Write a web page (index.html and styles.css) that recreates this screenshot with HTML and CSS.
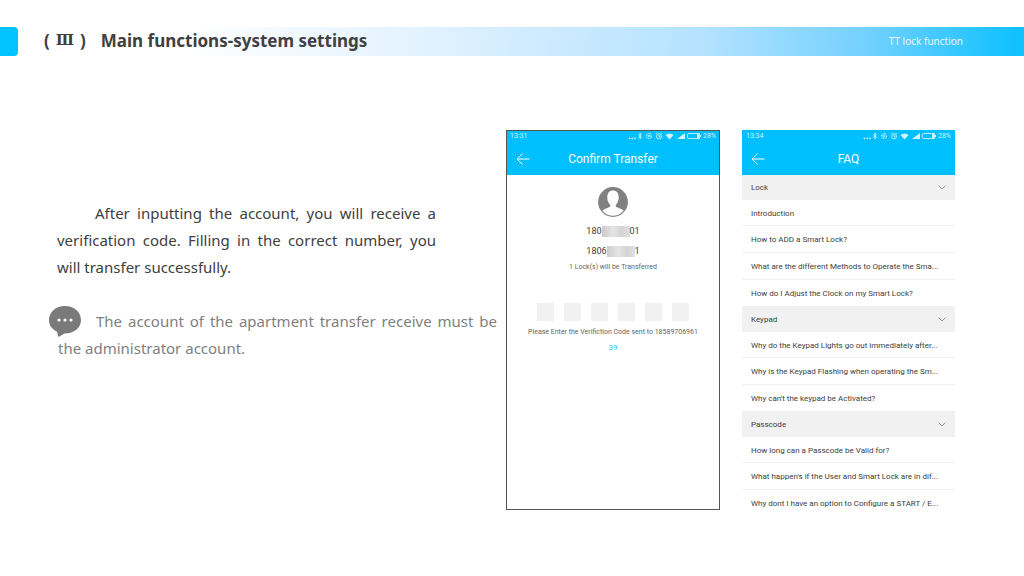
FILE: index.html
```html
<!DOCTYPE html>
<html lang="en">
<head>
<meta charset="utf-8">
<meta name="viewport" content="width=device-width, initial-scale=1">
<title>Main functions - system settings</title>
<link rel="stylesheet" href="styles.css">
</head>
<body>
<svg class="sprite" aria-hidden="true">
  <symbol id="status" viewBox="0 0 74 8">
    <g fill="currentColor">
      <circle cx="1.500" cy="6.300" r=".9"/><circle cx="4.200" cy="6.300" r=".9"/><circle cx="6.900" cy="6.300" r=".9"/>
      <path d="M37.500 3a6 6 0 0 1 8 0L41.500 7.500z"/>
      <path d="M49 7l8-6v6z"/>
      <path d="M69 1.500h3v5h-3z"/><path d="M72 3h1v2h-1z"/>
    </g>
    <g fill="none" stroke="currentColor" stroke-width=".9">
      <path d="M10.500 2.400l3 3L12 7V1l1.500 1.500-3 3"/>
      <circle cx="21" cy="4" r="2.600" stroke-dasharray="3 .8"/><circle cx="21" cy="4" r=".9"/>
      <circle cx="31" cy="4.300" r="2.500"/><path d="M28 1.800l1-1M34 1.800l-1-1M31 3v1.500h1.300"/>
      <rect x="59.500" y="1.500" width="12" height="5" rx="1"/>
    </g>
  </symbol>
  <symbol id="back" viewBox="0 0 14 12">
    <path d="M13.500 6H1M6.500 .7L1 6l5.500 5.300" fill="none" stroke="currentColor"/>
  </symbol>
  <symbol id="chevron" viewBox="0 0 8 5">
    <path d="M.5.500L4 4 7.500.500" fill="none" stroke="currentColor"/>
  </symbol>
</svg>

<header class="top">
  <span class="tab"></span>
  <div class="bar">
    <h1 class="title"><span class="numeral">(<span class="roman">Ⅲ</span>)</span>Main functions-system settings</h1>
    <span class="topic">TT lock function</span>
  </div>
</header>

<main class="content">
  <section class="copy">
    <p class="lead">After inputting the account, you will receive a verification code. Filling in the correct number, you will transfer successfully.</p>
    <div class="note">
      <svg class="bubble" viewBox="0 0 32 32" aria-hidden="true">
        <path d="M16 0C7 0 0 6 0 14.200c0 5 3 9 8 11.500L9.500 31l6-3.600C25 27.500 32 22 32 14.200 32 6 25 0 16 0z" fill="#7a7a7a"/>
        <g fill="#fff"><circle cx="10" cy="14" r="1.600"/><circle cx="16" cy="14" r="1.600"/><circle cx="22" cy="14" r="1.600"/></g>
      </svg>
      <p class="note-text">The account of the apartment transfer receive must be the administrator account.</p>
    </div>
  </section>

  <section class="phone framed">
    <header class="app">
      <div class="status"><span>13:31</span><svg class="status-icons" aria-hidden="true"><use href="#status"/></svg><span>28%</span></div>
      <div class="nav">
        <button class="back" type="button" aria-label="Back"><svg class="back-icon"><use href="#back"/></svg></button>
        <h2 class="app-title">Confirm Transfer</h2>
      </div>
    </header>
    <form class="confirm">
      <svg class="avatar" viewBox="0 0 30 30" aria-hidden="true">
        <circle cx="15" cy="15" r="14.300" fill="#fff" stroke="#808080" stroke-width="1.200"/>
        <path d="M15 .7A14.300 14.300 0 0 0 4 24c2-1.800 4.500-2.800 7.500-4 .9-.5.900-1.300.6-2.200C10.300 16 9.300 13.500 9.300 10.500 9.300 6 11.500 3.500 15 3.500s5.700 2.500 5.700 7c0 3-1 5.500-2.800 7.300-.3.900-.3 1.700.6 2.200 3 1.200 5.500 2.200 7.500 4A14.300 14.300 0 0 0 15 .7z" fill="#808080"/>
      </svg>
      <p class="account">180<span class="mask"></span>01</p>
      <p class="account">1806<span class="mask"></span>1</p>
      <p class="hint">1 Lock(s) will be Transferred</p>
      <div class="code">
        <input class="digit" aria-label="Digit 1" maxlength="1"><input class="digit" aria-label="Digit 2" maxlength="1"><input class="digit" aria-label="Digit 3" maxlength="1"><input class="digit" aria-label="Digit 4" maxlength="1"><input class="digit" aria-label="Digit 5" maxlength="1"><input class="digit" aria-label="Digit 6" maxlength="1">
      </div>
      <p class="hint">Please Enter the Verifiction Code sent to 18589706961</p>
      <p class="timer">39</p>
    </form>
  </section>

  <section class="phone">
    <header class="app">
      <div class="status"><span>13:34</span><svg class="status-icons" aria-hidden="true"><use href="#status"/></svg><span>28%</span></div>
      <div class="nav">
        <button class="back" type="button" aria-label="Back"><svg class="back-icon"><use href="#back"/></svg></button>
        <h2 class="app-title">FAQ</h2>
      </div>
    </header>
    <button class="group" type="button">Lock<svg class="chevron" aria-hidden="true"><use href="#chevron"/></svg></button>
    <ul class="questions">
      <li>Introduction</li>
      <li>How to ADD a Smart Lock?</li>
      <li>What are the different Methods to Operate the Sma...</li>
      <li>How do I Adjust the Clock on my Smart Lock?</li>
    </ul>
    <button class="group" type="button">Keypad<svg class="chevron" aria-hidden="true"><use href="#chevron"/></svg></button>
    <ul class="questions">
      <li>Why do the Keypad Lights go out immediately after...</li>
      <li>Why is the Keypad Flashing when operating the Sm...</li>
      <li>Why can't the keypad be Activated?</li>
    </ul>
    <button class="group" type="button">Passcode<svg class="chevron" aria-hidden="true"><use href="#chevron"/></svg></button>
    <ul class="questions">
      <li>How long can a Passcode be Valid for?</li>
      <li>What happen's if the User and Smart Lock are in dif...</li>
      <li>Why dont I have an option to Configure a START / E...</li>
    </ul>
  </section>
</main>
</body>
</html>
```
FILE: styles.css
```css
* { box-sizing: border-box; }
body {
  margin: 0;
  background: #fff;
  color: #404040;
  font-family: "Noto Sans", "Noto Sans CJK SC", sans-serif;
}
h1, h2, p, ul { margin: 0; padding: 0; }
button { border: 0; padding: 0; background: none; color: inherit; font: inherit; }
.sprite { display: none; }

.top { display: flex; padding-top: 27px; }
.tab { width: 18px; height: 29px; background: #00c4ff; border-radius: 0 4px 4px 0; }
.bar {
  flex: 1;
  display: flex;
  align-items: center;
  justify-content: space-between;
  height: 29px;
  padding: 0 61px 2px 26px;
  background: linear-gradient(97deg, #fff 17%, #e2f2ff 40%, #b4e2ff 68%, #74d1ff 84%, #10c1ff 99%);
}
.title { display: flex; gap: 15px; font-size: 17px; line-height: 27px; font-weight: 700; }
.numeral { display: flex; gap: 6px; }
.roman { font-family: "DejaVu Serif", serif; font-size: 15px; }
.topic { font-size: 10px; color: #e8f8ff; }

.content {
  display: grid;
  grid-template-columns: 484fr 214fr 213fr;
  column-gap: 22px;
  padding: 74px 69px 0 0;
  align-items: start;
}
.copy { margin-right: -22px; padding: 70px 9px 0 57px; font-size: 15px; line-height: 27px; }
.lead { padding-right: 61px; text-align: justify; text-indent: 38px; }
.note { position: relative; margin-top: 27px; color: #7f7f7f; }
.note-text { padding-left: 1px; text-align: justify; text-indent: 38px; }
.bubble { position: absolute; left: -8px; top: -2px; width: 32px; height: 32px; }

.phone { min-width: 0; font-family: Roboto, sans-serif; font-size: 8px; line-height: 10px; }
.framed { border: 1px solid #555; min-height: 380px; }
.app { height: 45px; background: #00bfff; color: #fff; }
.framed .app { height: 44px; }
.status { display: flex; align-items: center; gap: 1px; padding: 1px 4px 0; font-size: 7px; color: #d4f4ff; }
.framed .status { padding: 0 3px; }
.status-icons { width: 74px; height: 8px; margin-left: auto; }
.nav { display: grid; grid-template-columns: 14px 1fr 14px; align-items: center; padding: 9px 9px 0; }
.back { display: flex; }
.back-icon { width: 14px; height: 12px; }
.app-title { font-size: 12px; line-height: 18px; font-weight: 400; text-align: center; }

.confirm { display: flex; flex-direction: column; align-items: center; padding-top: 12px; }
.avatar { width: 30px; height: 30px; margin-bottom: 4px; }
.account { display: flex; align-items: center; font-size: 9px; line-height: 20px; }
.mask { width: 28px; height: 11px; background: linear-gradient(90deg, #ccc, #e4e4e4 40%, #d4d4d4 70%, #e0e0e0); }
.hint { padding-top: 1px; font-size: 7px; color: #666; white-space: nowrap; }
.code { display: flex; gap: 10px; padding: 31px 0 5px; }
.digit { width: 17px; height: 18px; border: 0; padding: 0; background: #f1f1f1; text-align: center; }
.timer { margin-top: 6px; color: #19c3ef; }

.group {
  display: flex;
  align-items: center;
  justify-content: space-between;
  width: 100%;
  height: 25px;
  padding: 0 9px;
  background: #f1f1f1;
}
.chevron { width: 8px; height: 5px; color: #999; }
.questions { list-style: none; }
.questions li { padding: 9px 0 7px 9px; border-bottom: 1px solid #f0f0f0; white-space: nowrap; }
.questions li:first-child { padding-bottom: 6px; }
.questions:last-child li:last-child { border-bottom: 0; }
```
